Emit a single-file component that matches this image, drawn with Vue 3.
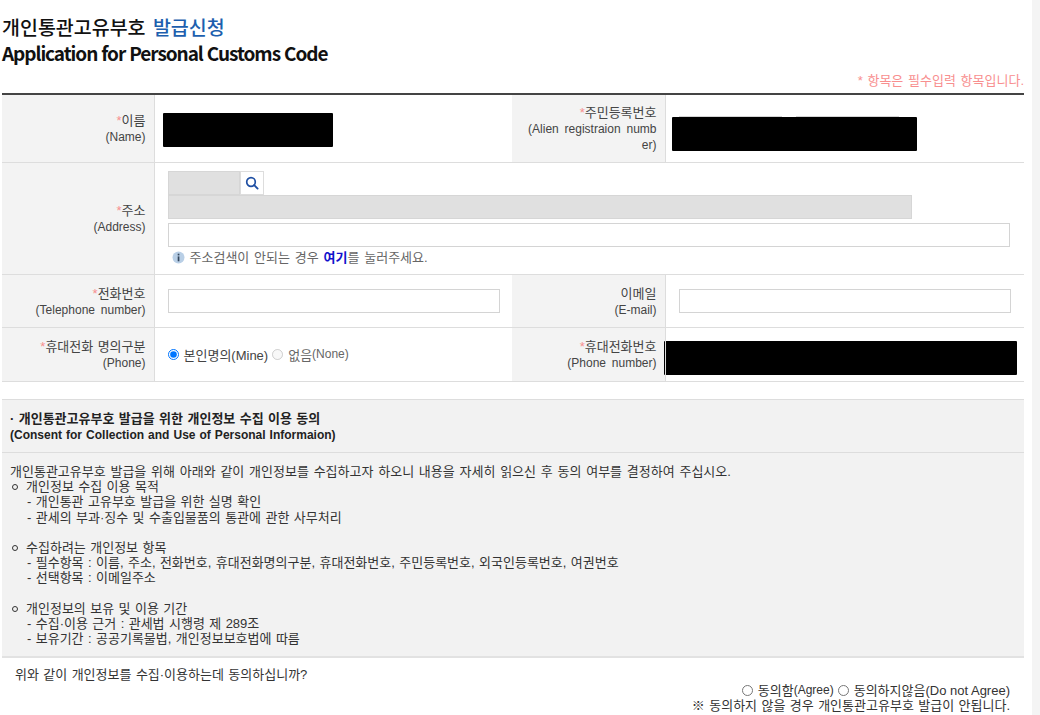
<template>
  <div class="page">
    <main class="content">
      <h1 class="title">
        <span class="title-ko">개인통관고유부호 <em>발급신청</em></span>
        <span class="title-en">Application for Personal Customs Code</span>
      </h1>
      <p class="req-note">* 항목은 필수입력 항목입니다.</p>

      <table class="form-table">
        <colgroup>
          <col class="col-label" />
          <col class="col-value" />
          <col class="col-label-2" />
          <col />
        </colgroup>
        <tbody>
          <tr class="row-name">
            <th><i>*</i>이름<br /><span class="en">(Name)</span></th>
            <td><div class="redact redact-name"></div></td>
            <th><i>*</i>주민등록번호<br /><span class="en">(Alien registraion numb<br />er)</span></th>
            <td class="td-id">
              <div class="id-wrap">
                <input class="id-input" type="text" />
                <input class="id-input" type="text" />
                <div class="redact redact-id"></div>
              </div>
            </td>
          </tr>
          <tr class="row-address">
            <th><i>*</i>주소<br /><span class="en">(Address)</span></th>
            <td colspan="3" class="td-address">
              <div class="zip-row">
                <span class="zip-box"></span>
                <button class="zip-btn" type="button" aria-label="search">
                  <svg width="14" height="14" viewBox="0 0 14 14" fill="none">
                    <circle cx="6" cy="6" r="4.3" stroke="#1f4fa3" stroke-width="1.7" />
                    <path d="M9.2 9.2 12.6 12.6" stroke="#1f4fa3" stroke-width="1.9" stroke-linecap="round" />
                  </svg>
                </button>
              </div>
              <div class="addr-disabled"></div>
              <input class="text-input addr-input" type="text" />
              <p class="addr-help">
                <svg width="13" height="13" viewBox="0 0 13 13">
                  <circle cx="6.5" cy="6.5" r="6" fill="#b9cfe6" />
                  <rect x="5.7" y="2.7" width="1.7" height="1.7" fill="#33465c" />
                  <rect x="5.7" y="5.4" width="1.7" height="4.9" fill="#33465c" />
                </svg>
                <span>주소검색이 안되는 경우 <b>여기</b>를 눌러주세요.</span>
              </p>
            </td>
          </tr>
          <tr class="row-tel">
            <th><i>*</i>전화번호<br /><span class="en">(Telephone number)</span></th>
            <td><input class="text-input" type="text" /></td>
            <th>이메일<br /><span class="en">(E-mail)</span></th>
            <td class="td-mail"><input class="text-input" type="text" /></td>
          </tr>
          <tr class="row-phone">
            <th><i>*</i>휴대전화 명의구분<br /><span class="en">(Phone)</span></th>
            <td>
              <div class="radios">
                <label><input type="radio" name="owner" checked />본인명의(Mine)</label>
                <label class="off"><input type="radio" name="owner" disabled />없음<span class="en">(None)</span></label>
              </div>
            </td>
            <th><i>*</i>휴대전화번호<br /><span class="en">(Phone number)</span></th>
            <td class="td-phone"><div class="redact redact-phone"></div></td>
          </tr>
        </tbody>
      </table>

      <section class="consent">
        <h2 class="consent-head">
          · 개인통관고유부호 발급을 위한 개인정보 수집 이용 동의<br />
          <span class="en">(Consent for Collection and Use of Personal Informaion)</span>
        </h2>
        <div class="consent-body">
          <p class="lead">개인통관고유부호 발급을 위해 아래와 같이 개인정보를 수집하고자 하오니 내용을 자세히 읽으신 후 동의 여부를 결정하여 주십시오.</p>
          <template v-for="group in terms" :key="group.title">
            <p class="term-title"><span class="bullet"></span>{{ group.title }}</p>
            <p v-for="line in group.lines" :key="line" class="term-line">- {{ line }}</p>
            <p class="spacer"></p>
          </template>
        </div>
      </section>

      <div class="agree">
        <p class="question">위와 같이 개인정보를 수집·이용하는데 동의하십니까?</p>
        <div class="agree-opts">
          <label><input type="radio" name="agree" />동의함<span class="en">(Agree)</span></label>
          <label class="no-space"><input type="radio" name="agree" />동의하지않음(Do not Agree)</label>
        </div>
        <p class="agree-note">※ 동의하지 않을 경우 개인통관고유부호 발급이 안됩니다.</p>
      </div>
    </main>
    <div class="scroll-strip"></div>
  </div>
</template>

<script setup>
const terms = [
  {
    title: "개인정보 수집 이용 목적",
    lines: [
      "개인통관 고유부호 발급을 위한 실명 확인",
      "관세의 부과·징수 및 수출입물품의 통관에 관한 사무처리",
    ],
  },
  {
    title: "수집하려는 개인정보 항목",
    lines: [
      "필수항목 : 이름, 주소, 전화번호, 휴대전화명의구분, 휴대전화번호, 주민등록번호, 외국인등록번호, 여권번호",
      "선택항목 : 이메일주소",
    ],
  },
  {
    title: "개인정보의 보유 및 이용 기간",
    lines: [
      "수집·이용 근거 : 관세법 시행령 제 289조",
      "보유기간 : 공공기록물법, 개인정보보호법에 따름",
    ],
  },
];
</script>

<style>
html,
body {
  margin: 0;
  background: #fff;
  overflow: hidden;
}
</style>

<style scoped>
.page {
  display: flex;
  width: 1040px;
  height: 715px;
  overflow: hidden;
  font-family: "Liberation Sans", "Noto Sans CJK KR", sans-serif;
  font-size: 13px;
  word-spacing: 0.8px;
  color: #444;
}

.en {
  font-size: 12px;
  word-spacing: 0;
}

.content {
  width: 1022px;
  margin-left: 2px;
  flex: none;
}

.scroll-strip {
  width: 8px;
  margin-left: 8px;
  background: #f4f4f4;
}

.title {
  margin: 0;
  padding-top: 14px;
  font-family: "Noto Sans CJK KR", sans-serif;
  font-size: 19.5px;
  font-weight: 500;
  line-height: 26px;
  color: #111;
}

.title span {
  display: block;
  height: 26px;
}

.title-ko {
  word-spacing: 3px;
}

.title span.title-en {
  font-size: 19px;
  font-weight: 700;
  letter-spacing: -1.06px;
}

.title em {
  font-style: normal;
  color: #1d5fae;
}

.req-note {
  margin: 0;
  padding-top: 5px;
  height: 22px;
  line-height: 20px;
  text-align: right;
  word-spacing: 1.1px;
  color: #f88f8f;
}

.form-table {
  width: 1022px;
  table-layout: fixed;
  border-collapse: collapse;
  border-top: 2px solid #444;
}

.col-label {
  width: 152px;
}

.col-value {
  width: 358px;
}

.col-label-2 {
  width: 153px;
}

.form-table tr {
  border-bottom: 1px solid #ddd;
}

.row-name {
  height: 68px;
}

.row-address {
  height: 112px;
}

.row-tel {
  height: 53px;
}

.row-phone {
  height: 54px;
}

.form-table th {
  padding: 2px 8px 0 0;
  background: #f3f3f3;
  border-right: 1px solid #ddd;
  text-align: right;
  font-weight: 400;
  line-height: 16px;
  color: #444;
}

.form-table th .en {
  word-spacing: 2.5px;
}

.form-table th i {
  font-style: normal;
  color: #f88f8f;
}

.form-table td {
  padding: 0 0 0 13px;
  vertical-align: middle;
}

.form-table td.td-id {
  padding-left: 6px;
}

.form-table td.td-phone {
  padding-left: 0;
}

.form-table td.td-mail {
  padding-right: 13px;
}

.redact {
  background: #000;
  border-radius: 1px;
  height: 34px;
}

.redact-name {
  width: 170px;
  margin: 4px 0 0 -5px;
}

.id-wrap {
  position: relative;
  display: flex;
  gap: 14px;
  height: 35px;
  margin-top: 11px;
  padding-left: 7px;
}

.id-input {
  width: 103px;
  height: 24px;
  box-sizing: border-box;
  margin: 0;
  padding: 0;
  background: #fff;
  border: 1px solid #d4d4d4;
  outline: none;
}

.redact-id {
  position: absolute;
  top: 1px;
  left: 0;
  width: 245px;
}

.redact-phone {
  width: 353px;
  margin: 7px 0 0 -2px;
}

.zip-row {
  display: flex;
  height: 24px;
}

.zip-box {
  width: 72px;
  background: #e0e0e0;
  border: 1px solid #d6d6d6;
  box-sizing: border-box;
}

.zip-btn {
  display: flex;
  align-items: center;
  justify-content: center;
  width: 24px;
  padding: 0;
  background: #fff;
  border: 1px solid #ddd;
}

.addr-disabled {
  width: 744px;
  height: 24px;
  box-sizing: border-box;
  background: #e0e0e0;
  border: 1px solid #d6d6d6;
}

.text-input {
  display: block;
  width: 100%;
  height: 24px;
  box-sizing: border-box;
  margin: 0;
  padding: 0 6px;
  background: #fff;
  border: 1px solid #d4d4d4;
  outline: none;
}

.addr-input {
  width: 842px;
  margin-top: 4px;
}

.form-table td:not(.td-address):not(.td-mail) .text-input {
  width: 332px;
}

.addr-help {
  display: flex;
  align-items: center;
  gap: 5px;
  margin: 3px 0 0 4px;
  line-height: 16px;
  word-spacing: 1.2px;
  color: #666;
}

.addr-help b {
  font-weight: 700;
  color: #1111cc;
}

.radios {
  display: flex;
  align-items: center;
  gap: 4px;
}

.radios label,
.agree-opts label {
  display: inline-flex;
  align-items: center;
}

.radios input,
.agree-opts input {
  width: 11px;
  height: 11px;
  margin: 0 5px 0 0;
}

.radios .off {
  color: #666;
}

.consent {
  margin-top: 17px;
  background: #f2f2f2;
  border-top: 1px solid #ddd;
  border-bottom: 2px solid #e2e2e2;
}

.consent-head {
  margin: 0;
  padding: 11px 8px 9px;
  height: 32px;
  font-size: 13px;
  font-weight: 700;
  line-height: 16px;
  color: #222;
  border-bottom: 1px solid #ddd;
}

.consent-head .en {
  word-spacing: 0.7px;
}

.consent-body {
  padding: 11.5px 8px 9.5px;
  color: #333;
}

.consent-body p {
  margin: 0;
  height: 15.2px;
  line-height: 15.2px;
  white-space: nowrap;
}

.consent-body .lead {
  word-spacing: 1.15px;
}

.consent-body .spacer:last-child {
  display: none;
}

.bullet {
  display: inline-block;
  width: 6px;
  height: 6px;
  margin: 0 8px 1px 2px;
  border: 1.3px solid #333;
  border-radius: 50%;
  box-sizing: border-box;
}

.term-line {
  padding-left: 17px;
}

.agree {
  color: #333;
  line-height: 15px;
}

.question {
  margin: 0;
  padding: 9px 0 0 13px;
}

.agree-opts {
  display: flex;
  justify-content: flex-end;
  gap: 4px;
  margin-top: 1px;
  padding-right: 14px;
}

.agree-opts .no-space {
  word-spacing: 0;
}

.agree-note {
  margin: 0;
  text-align: right;
  padding-right: 14px;
}
</style>
